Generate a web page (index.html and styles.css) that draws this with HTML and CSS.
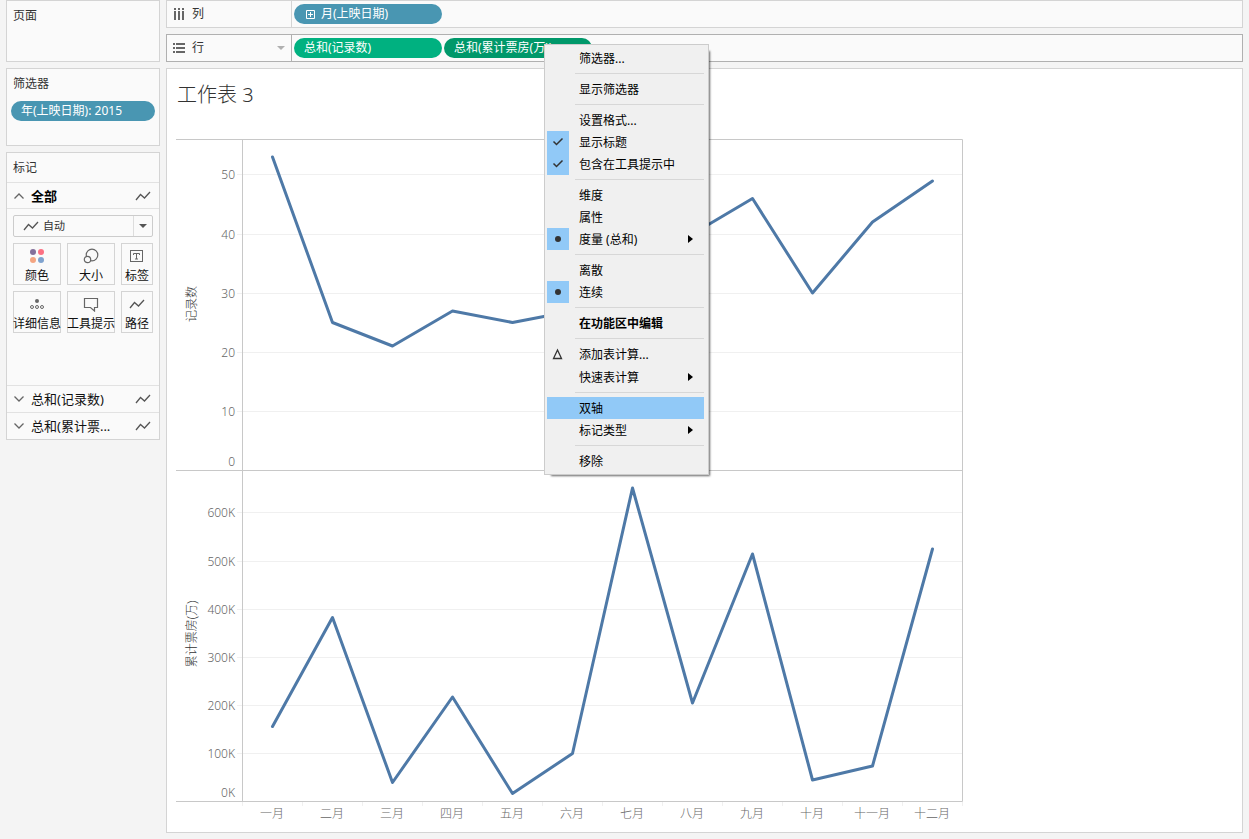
FILE: index.html
```html
<!DOCTYPE html>
<html lang="zh-CN">
<head>
   <meta charset="UTF-8">
   <meta name="viewport" content="width=device-width, initial-scale=1.0">
   <title>工作表 3</title>
   <link rel="stylesheet" href="styles.css">
</head>
<body>
   <svg class="defs" aria-hidden="true">
      <symbol id="i-line" viewBox="0 0 16 10"><path d="M1 9 L5.500 3.500 L9.500 7 L15 1" fill="none" stroke="#555" stroke-width="1.300"/></symbol>
      <symbol id="i-up" viewBox="0 0 12 8"><path d="M1.500 6.500 L6 2 L10.500 6.500" fill="none" stroke="#666" stroke-width="1.300"/></symbol>
      <symbol id="i-down" viewBox="0 0 12 8"><path d="M1.500 1.500 L6 6 L10.500 1.500" fill="none" stroke="#666" stroke-width="1.300"/></symbol>
      <symbol id="i-caret" viewBox="0 0 8 4"><path d="M0 0 H8 L4 4 Z" fill="currentColor"/></symbol>
      <symbol id="i-check" viewBox="0 0 22 22"><path d="M6.500 10.500 L9.500 13.500 L15.500 7.500" fill="none" stroke="#333" stroke-width="1.500"/></symbol>
      <symbol id="i-dot" viewBox="0 0 22 22"><circle cx="11" cy="11" r="3" fill="#333"/></symbol>
   </svg>

   <aside class="side">
      <section class="card pages">
         <h2>页面</h2>
      </section>
      <section class="card filters">
         <h2>筛选器</h2>
         <button class="pill blue">年(上映日期): 2015</button>
      </section>
      <section class="card marks">
         <h2>标记</h2>
         <button class="layer current">
            <svg width="12" height="8"><use href="#i-up"/></svg>
            <span>全部</span>
            <svg width="16" height="10"><use href="#i-line"/></svg>
         </button>
         <div class="controls">
            <div class="mark-type">
               <svg width="16" height="10"><use href="#i-line"/></svg>
               <select aria-label="标记类型">
                  <option>自动</option>
                  <option>线</option>
                  <option>条形图</option>
               </select>
               <svg class="caret" width="8" height="4"><use href="#i-caret"/></svg>
            </div>
            <div class="shelves">
               <button>
                  <svg width="16" height="16" viewBox="0 0 16 16"><circle cx="4" cy="4" r="3" fill="#84709b"/><circle cx="12" cy="4" r="3" fill="#fc7183"/><circle cx="4" cy="12" r="3" fill="#f4a582"/><circle cx="12" cy="12" r="3" fill="#7fa3cf"/></svg>
                  颜色
               </button>
               <button>
                  <svg width="16" height="16" viewBox="0 0 16 16"><g fill="#fafafa" stroke="#666" stroke-width="1.200"><circle cx="9" cy="7" r="5.800"/><circle cx="4.500" cy="11.500" r="3.200"/></g></svg>
                  大小
               </button>
               <button>
                  <svg width="16" height="16" viewBox="0 0 16 16" fill="none" stroke="#666"><rect x="1.500" y="2.500" width="12" height="11"/><path d="M4.500 7 V5.500 H10.500 V7 M7.500 5.500 V11 M6 11 H9"/></svg>
                  标签
               </button>
               <button>
                  <svg width="16" height="16" viewBox="0 0 16 16"><circle cx="8" cy="5" r="2" fill="#666"/><g fill="none" stroke="#666"><circle cx="3" cy="11" r="1.500"/><circle cx="8" cy="11" r="1.500"/><circle cx="13" cy="11" r="1.500"/></g></svg>
                  详细信息
               </button>
               <button>
                  <svg width="16" height="16" viewBox="0 0 16 16"><path d="M1.500 2.500 H14.500 V11.500 H11.500 V15 L7.500 11.500 H1.500 Z" fill="none" stroke="#666" stroke-width="1.200"/></svg>
                  工具提示
               </button>
               <button>
                  <svg width="16" height="16" viewBox="0 0 16 16"><use href="#i-line" x="0" y="3" width="16" height="10"/></svg>
                  路径
               </button>
            </div>
         </div>
         <button class="layer">
            <svg width="12" height="8"><use href="#i-down"/></svg>
            <span>总和(记录数)</span>
            <svg width="16" height="10"><use href="#i-line"/></svg>
         </button>
         <button class="layer" title="总和(累计票房(万))">
            <svg width="12" height="8"><use href="#i-down"/></svg>
            <span>总和(累计票...</span>
            <svg width="16" height="10"><use href="#i-line"/></svg>
         </button>
      </section>
   </aside>

   <main>
      <div class="shelf">
         <div class="shelf-name">
            <svg width="12" height="12" viewBox="0 0 12 12" fill="#666"><path d="M1 0h2v2H1z M5 0h2v2H5z M9 0h2v2H9z M1 3h2v9H1z M5 3h2v9H5z M9 3h2v9H9z"/></svg>
            <span>列</span>
         </div>
         <button class="pill blue">
            <svg width="9" height="9" viewBox="0 0 9 9"><path d="M.5 .5 H8.500 V8.500 H.5 Z M2 4.500 H7 M4.500 2 V7" fill="none" stroke="#fff"/></svg>
            月(上映日期)
         </button>
      </div>
      <div class="shelf active">
         <div class="shelf-name">
            <svg width="12" height="12" viewBox="0 0 12 12" fill="#666"><path d="M0 1h2v2H0z M0 5h2v2H0z M0 9h2v2H0z M3 1h9v2H3z M3 5h9v2H3z M3 9h9v2H3z"/></svg>
            <span>行</span>
            <svg class="caret" width="8" height="4"><use href="#i-caret"/></svg>
         </div>
         <button class="pill green">总和(记录数)</button>
         <div class="pill-wrap">
            <button class="pill dark">总和(累计票房(万))</button>
            <div class="menu" role="menu">
               <button>筛选器...</button>
               <hr>
               <button>显示筛选器</button>
               <hr>
               <button>设置格式...</button>
               <button class="on"><svg><use href="#i-check"/></svg>显示标题</button>
               <button class="on"><svg><use href="#i-check"/></svg>包含在工具提示中</button>
               <hr>
               <button>维度</button>
               <button>属性</button>
               <button class="on sub"><svg><use href="#i-dot"/></svg>度量 (总和)</button>
               <hr>
               <button>离散</button>
               <button class="on"><svg><use href="#i-dot"/></svg>连续</button>
               <hr>
               <button class="default">在功能区中编辑</button>
               <hr>
               <button class="calc"><svg viewBox="0 0 22 22"><path d="M10.500 7 L14.500 15.500 H6.500 Z" fill="none" stroke="#333" stroke-width="1.300"/></svg>添加表计算...</button>
               <button class="sub">快速表计算</button>
               <hr>
               <button class="selected">双轴</button>
               <button class="sub">标记类型</button>
               <hr>
               <button>移除</button>
            </div>
         </div>
      </div>

      <section class="sheet">
         <h1>工作表 3</h1>
         <svg class="chart" width="788" height="686" viewBox="0 0 788 686">
            <g class="grid">
               <path d="M61 35.500 H786 M61 95.500 H786 M61 154.500 H786 M61 213.500 H786 M61 272.500 H786"/>
               <path d="M61 373.500 H786 M61 422.500 H786 M61 470.500 H786 M61 518.500 H786 M61 566.500 H786 M61 614.500 H786"/>
               <path d="M66.500 663 v4 M126.500 663 v4 M186.500 663 v4 M246.500 663 v4 M306.500 663 v4 M366.500 663 v4 M426.500 663 v4 M486.500 663 v4 M546.500 663 v4 M606.500 663 v4 M666.500 663 v4 M726.500 663 v4 M786.500 663 v4"/>
            </g>
            <path class="frame" d="M0 .5 H786.500 V662.500 H0 M0 331.500 H786 M66.500 0 V662"/>
            <g class="line">
               <polyline points="96.500,18 156.500,183.500 216.500,207 276.500,172 336.500,183.500 396.500,172 456.500,154 516.500,95 576.500,59.500 636.500,154 696.500,83 756.500,42"/>
               <polyline points="96.500,587.500 156.500,478.500 216.500,643.500 276.500,558 336.500,654.500 396.500,614.500 456.500,349 516.500,564 576.500,415 636.500,641 696.500,627 756.500,410"/>
            </g>
            <g class="ticks">
               <text x="59" y="40">50</text>
               <text x="59" y="100">40</text>
               <text x="59" y="159">30</text>
               <text x="59" y="218">20</text>
               <text x="59" y="277">10</text>
               <text x="59" y="327">0</text>
               <text x="59" y="378">600K</text>
               <text x="59" y="427">500K</text>
               <text x="59" y="475">400K</text>
               <text x="59" y="523">300K</text>
               <text x="59" y="571">200K</text>
               <text x="59" y="619">100K</text>
               <text x="59" y="658">0K</text>
            </g>
            <g class="names">
               <text x="96" y="679">一月</text>
               <text x="156" y="679">二月</text>
               <text x="216" y="679">三月</text>
               <text x="276" y="679">四月</text>
               <text x="336" y="679">五月</text>
               <text x="396" y="679">六月</text>
               <text x="456" y="679">七月</text>
               <text x="516" y="679">八月</text>
               <text x="576" y="679">九月</text>
               <text x="636" y="679">十月</text>
               <text x="696" y="679">十一月</text>
               <text x="756" y="679">十二月</text>
            </g>
            <g class="titles">
               <text transform="translate(20 165) rotate(-90)">记录数</text>
               <text transform="translate(20 495) rotate(-90)">累计票房(万)</text>
            </g>
         </svg>
      </section>
   </main>
</body>
</html>
```
FILE: styles.css
```css
* {
   box-sizing: border-box;
   margin: 0;
   padding: 0;
}
body {
   display: grid;
   grid-template-columns: 154px 1fr;
   gap: 6px;
   min-height: 100vh;
   padding: 0 6px 6px;
   background-color: #f4f4f4;
   color: #333;
   font-family: "Noto Sans", "Noto Sans CJK SC", sans-serif;
   font-size: 12px;
   line-height: 20px;
}
button, select {
   font: inherit;
   color: inherit;
   border: none;
   background: none;
   text-align: left;
   white-space: nowrap;
   cursor: pointer;
}
svg {
   display: block;
   flex: none;
}
.defs {
   position: absolute;
   width: 0;
   height: 0;
}

/* side cards */
.side, main {
   display: flex;
   flex-direction: column;
   gap: 6px;
   min-width: 0;
}
.card {
   border: 1px solid #d4d4d4;
   background-color: #fafafa;
}
.card h2 {
   padding: 5px 6px 4px;
   font-size: 12px;
   font-weight: normal;
}
.pages {
   min-height: 62px;
}
.filters {
   min-height: 78px;
}
.filters .pill {
   width: 144px;
   margin: 3px 0 0 4px;
}
.pill {
   display: flex;
   align-items: center;
   gap: 6px;
   width: 148px;
   height: 20px;
   padding: 0 10px;
   border-radius: 10px;
   color: #fff;
}
.pill svg {
   margin-left: 2px;
}
.blue {
   background-color: #4996b2;
}
.green {
   background-color: #00b180;
}
.dark {
   background-color: #00986a;
}

/* marks */
.marks h2 {
   height: 29px;
}
.layer {
   display: flex;
   align-items: center;
   gap: 6px;
   width: 100%;
   height: 27px;
   padding: 0 8px 0 6px;
   border-top: 1px solid #e2e2e2;
   color: #111;
   font-size: 13px;
}
.layer span {
   flex: 1;
}
.layer.current {
   border-bottom: 1px solid #e2e2e2;
   color: #000;
   font-weight: bold;
}
.controls {
   min-height: 176px;
   padding: 6px;
}
.mark-type {
   display: flex;
   align-items: center;
   height: 22px;
   padding-left: 9px;
   border: 1px solid #ccc;
   border-radius: 2px;
}
.mark-type select {
   flex: 1;
   height: 20px;
   padding-left: 4px;
   appearance: none;
   outline: none;
   font-size: 11px;
}
.mark-type .caret {
   box-sizing: content-box;
   padding: 8px 5px;
   border-left: 1px solid #ddd;
   color: #555;
}
.shelves {
   display: grid;
   grid-template-columns: 48px 48px 32px;
   gap: 6px;
   margin-top: 6px;
}
.shelves button {
   display: flex;
   flex-direction: column;
   align-items: center;
   gap: 2px;
   height: 42px;
   padding-top: 4px;
   border: 1px solid #d4d4d4;
   color: #111;
}
.shelves button:hover {
   border-color: #999;
}

/* columns and rows */
.shelf {
   display: flex;
   align-items: center;
   gap: 2px;
   height: 28px;
   border: 1px solid #d4d4d4;
   background-color: #fafafa;
}
.shelf-name {
   display: flex;
   align-items: center;
   gap: 7px;
   width: 125px;
   height: 26px;
   padding: 0 6px;
   border-right: 1px solid #d4d4d4;
}
.shelf-name .caret {
   margin-left: auto;
   color: #b0b0b0;
}
.active, .active .shelf-name {
   border-color: #b0b0b0;
}
.pill-wrap {
   position: relative;
}

/* context menu */
.menu {
   position: absolute;
   z-index: 1;
   left: 100px;
   top: 6px;
   width: 165px;
   padding: 2px 4px 2px 2px;
   border: 1px solid #ccc;
   background-color: #f0f0f0;
   box-shadow: 4px 4px 2px -3px rgba(0, 0, 0, 0.6);
   color: #000;
}
.menu button {
   display: block;
   position: relative;
   width: 100%;
   height: 22px;
   padding-left: 32px;
   line-height: 24px;
}
.menu button.calc {
   height: 23px;
}
.menu button:hover, .menu .selected {
   background-color: #91c9f7;
}
.menu svg {
   position: absolute;
   left: 0;
   top: 0;
   width: 22px;
   height: 22px;
}
.menu .on svg {
   background-color: #91c9f7;
}
.menu .sub::after {
   content: "";
   position: absolute;
   right: 11px;
   top: 7px;
   border: 4px solid transparent;
   border-left: 5px solid #000;
   border-right: none;
}
.menu .default {
   font-weight: bold;
}
.menu hr {
   margin: 4px 0 4px 28px;
   border: none;
   border-top: 1px solid #d7d7d7;
}

/* worksheet */
.sheet {
   flex: 1;
   padding: 10px 9px 6px;
   border: 1px solid #d4d4d4;
   background-color: #fff;
}
.sheet h1 {
   height: 60px;
   padding-left: 1px;
   font-size: 20px;
   font-weight: 300;
   line-height: 32px;
}
.grid {
   stroke: #f0f0f0;
}
.frame {
   fill: none;
   stroke: #c8c8c8;
}
.line {
   fill: none;
   stroke: #4e79a7;
   stroke-width: 3px;
   stroke-linejoin: round;
   stroke-linecap: round;
}
.chart text {
   fill: #666;
   font-size: 12px;
   font-weight: 300;
}
.chart .ticks {
   text-anchor: end;
}
.names, .titles {
   text-anchor: middle;
}
.chart .titles text {
   fill: #333;
}
```
